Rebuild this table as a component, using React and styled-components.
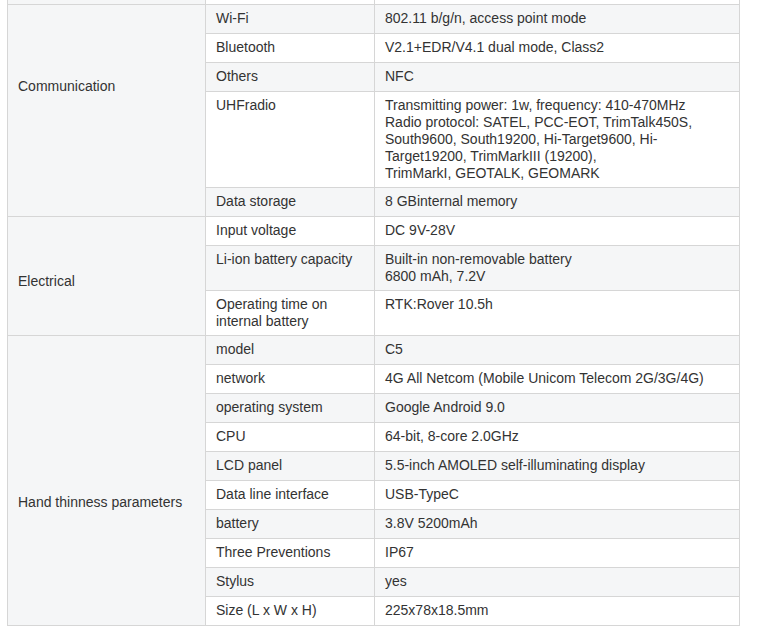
import React from "react";
import styled, { createGlobalStyle } from "styled-components";

const Global = createGlobalStyle`
  html, body { margin: 0; padding: 0; background: #fff; }
  body { font-family: "Liberation Sans", Arial, sans-serif; color: #333; }
`;

const Page = styled.div`
  padding: 0 0 0 7px;
  width: 770px;
  height: 636px;
  overflow: hidden;
  box-sizing: border-box;
`;

const Table = styled.table`
  border-collapse: collapse;
  table-layout: fixed;
  width: 732px;
  font-size: 14px;
  line-height: 17px;
  color: #333;
`;

const Row = styled.tr`
  background: ${(p) => (p.$shade ? "#f5f6f7" : "#fff")};
`;

const Cell = styled.td`
  border: 1px solid #d6d6d6;
  padding: 5px 10px 5px;
  height: 18px;
  vertical-align: top;
  text-align: left;
`;

const LabelCell = styled(Cell)`
  background: #f5f6f7;
  vertical-align: middle;
  height: auto;
  padding-top: ${(p) => p.$top}px;
  padding-bottom: ${(p) => p.$bottom}px;
`;

const StubCell = styled(Cell)`
  border-top: none;
  padding: 0;
  height: 4px;
  background: ${(p) => (p.$label ? "#f5f6f7" : "#fff")};
`;

const sections = [
  {
    label: "Communication",
    top: 5,
    bottom: 54,
    rows: [
      ["Wi-Fi", "802.11 b/g/n, access point mode"],
      ["Bluetooth", "V2.1+EDR/V4.1 dual mode, Class2"],
      ["Others", "NFC"],
      [
        "UHFradio",
        [
          "Transmitting power: 1w, frequency: 410-470MHz",
          "Radio protocol: SATEL, PCC-EOT, TrimTalk450S,",
          "South9600, South19200, Hi-Target9600, Hi-",
          "Target19200, TrimMarkIII (19200),",
          "TrimMarkI, GEOTALK, GEOMARK",
        ],
      ],
      ["Data storage", "8 GBinternal memory"],
    ],
  },
  {
    label: "Electrical",
    top: 16,
    bottom: 5,
    rows: [
      ["Input voltage", "DC 9V-28V"],
      ["Li-ion battery capacity", ["Built-in non-removable battery", "6800 mAh, 7.2V"]],
      ["Operating time on internal battery", "RTK:Rover 10.5h"],
    ],
  },
  {
    label: "Hand thinness parameters",
    top: 49,
    bottom: 5,
    rows: [
      ["model", "C5"],
      ["network", "4G All Netcom (Mobile Unicom Telecom 2G/3G/4G)"],
      ["operating system", "Google Android 9.0"],
      ["CPU", "64-bit, 8-core 2.0GHz"],
      ["LCD panel", "5.5-inch AMOLED self-illuminating display"],
      ["Data line interface", "USB-TypeC"],
      ["battery", "3.8V 5200mAh"],
      ["Three Preventions", "IP67"],
      ["Stylus", "yes"],
      ["Size (L x W x H)", "225x78x18.5mm"],
    ],
  },
];

function renderValue(v) {
  if (Array.isArray(v)) {
    return v.map((line, i) => (
      <React.Fragment key={i}>
        {i > 0 && <br />}
        {line}
      </React.Fragment>
    ));
  }
  return v;
}

export default function App() {
  let index = 0;
  return (
    <Page>
      <Global />
      <Table>
        <colgroup>
          <col style={{ width: 198 }} />
          <col style={{ width: 169 }} />
          <col style={{ width: 365 }} />
        </colgroup>
        <tbody>
          <Row>
            <StubCell $label />
            <StubCell />
            <StubCell />
          </Row>
          {sections.map((s) =>
            s.rows.map(([k, v], i) => {
              const shade = index++ % 2 === 0;
              return (
                <Row key={s.label + k} $shade={shade}>
                  {i === 0 && (
                    <LabelCell rowSpan={s.rows.length} $top={s.top} $bottom={s.bottom}>
                      {s.label}
                    </LabelCell>
                  )}
                  <Cell>{k}</Cell>
                  <Cell>{renderValue(v)}</Cell>
                </Row>
              );
            })
          )}
        </tbody>
      </Table>
    </Page>
  );
}
